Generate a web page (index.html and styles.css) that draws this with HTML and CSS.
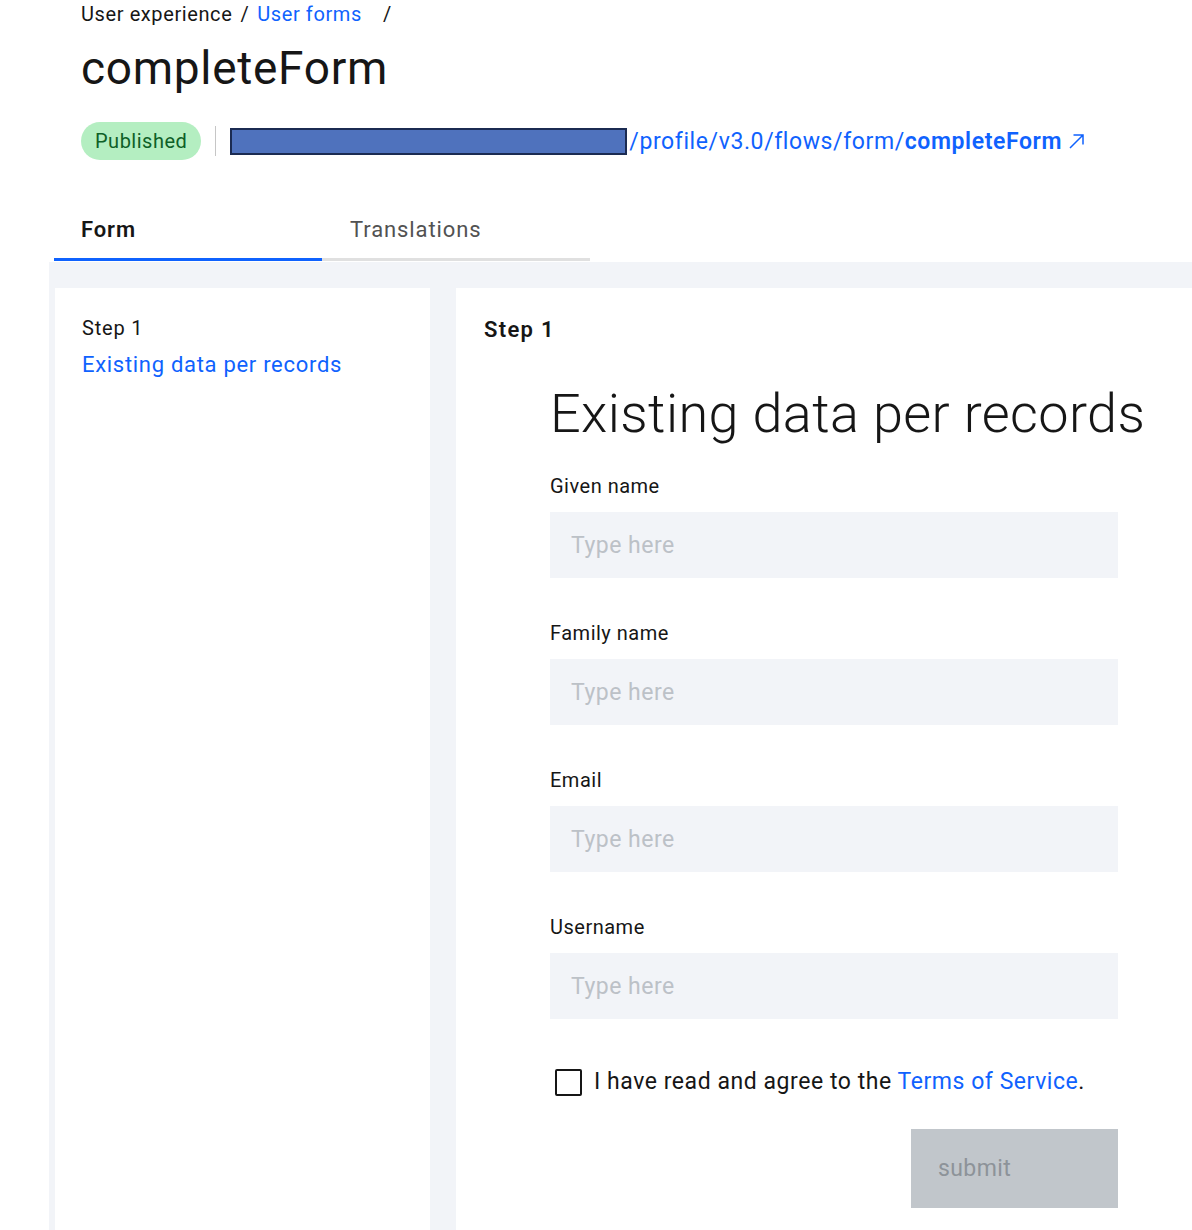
FILE: index.html
```html
<!DOCTYPE html>
<html lang="en">
  <head>
    <meta charset="UTF-8" />
    <meta name="viewport" content="width=device-width, initial-scale=1.0" />
    <title>completeForm</title>
    <link rel="stylesheet" href="styles.css">
  </head>
  <body>
    <div class="page-header">
      <nav class="breadcrumb">
        <span>User experience</span>
        <span class="crumb-sep">/</span>
        <a href="#">User forms</a>
        <span class="crumb-sep last">/</span>
      </nav>
      <h1 class="title">completeForm</h1>
      <div class="meta">
        <span class="tag">Published</span>
        <span class="divider"></span>
        <a class="endpoint" href="#"><span class="redacted"></span>/profile/v3.0/flows/form/<strong>completeForm</strong><svg class="launch" width="20" height="20" viewBox="0 0 20 20"><path d="M3 17 L16 4 M6.5 4 H16 V13.5" fill="none" stroke="currentColor" stroke-width="1.5"/></svg></a>
      </div>
    </div>

    <div class="tabs">
      <button class="tab active">Form</button>
      <button class="tab">Translations</button>
    </div>

    <div class="workspace">
      <aside class="steps">
        <div class="step-num">Step 1</div>
        <a class="step-link" href="#">Existing data per records</a>
      </aside>

      <section class="preview">
        <div class="preview-step">Step 1</div>
        <form class="user-form">
          <h2 class="form-title">Existing data per records</h2>

          <div class="field">
            <label>Given name</label>
            <input type="text" placeholder="Type here">
          </div>
          <div class="field">
            <label>Family name</label>
            <input type="text" placeholder="Type here">
          </div>
          <div class="field">
            <label>Email</label>
            <input type="text" placeholder="Type here">
          </div>
          <div class="field">
            <label>Username</label>
            <input type="text" placeholder="Type here">
          </div>

          <label class="agree">
            <span class="box"></span>
            <span>I have read and agree to the <a href="#">Terms of Service</a>.</span>
          </label>

          <div class="actions">
            <button type="button" class="submit" disabled>submit</button>
          </div>
        </form>
      </section>
    </div>
  </body>
</html>
```

FILE: styles.css
```css
* {
  box-sizing: border-box;
}
body {
  margin: 0;
  font-family: Roboto, "Noto Sans", sans-serif;
  color: #161616;
  background: #fff;
  overflow: hidden;
}
a {
  color: #0f62fe;
  text-decoration: none;
}

.page-header {
  padding: 2px 0 0 81px;
}
.breadcrumb {
  font-size: 20px;
  line-height: 24px;
  letter-spacing: 0.6px;
  display: flex;
}
.crumb-sep {
  margin: 0 8px;
}
.crumb-sep.last {
  margin-left: 21px;
}
.title {
  margin: 14px 0 0;
  font-size: 46px;
  line-height: 56px;
  font-weight: 400;
  letter-spacing: 0.7px;
}
.meta {
  margin-top: 26px;
  display: flex;
  align-items: center;
  height: 38px;
}
.tag {
  background: #b4eec1;
  color: #0e6027;
  font-size: 20px;
  letter-spacing: 0.5px;
  height: 38px;
  line-height: 38px;
  padding: 0 14px;
  border-radius: 19px;
}
.divider {
  width: 1px;
  height: 30px;
  background: #c6c6c6;
  margin: 0 14px;
}
.endpoint {
  display: flex;
  align-items: center;
  font-size: 23px;
  letter-spacing: 0.6px;
}
.redacted {
  width: 397px;
  height: 27px;
  background: #4f72bd;
  border: 2px solid #1b2b52;
  margin-right: 2px;
}
.endpoint strong {
  font-weight: 600;
}
.launch {
  margin-left: 5px;
}

.tabs {
  margin: 40px 0 1px 54px;
  display: flex;
}
.tab {
  width: 268px;
  text-align: left;
  background: none;
  border: 0;
  border-bottom: 3px solid #e0e0e0;
  padding: 16px 0 14px 28px;
  font-family: inherit;
  font-size: 22px;
  letter-spacing: 0.9px;
  line-height: 28px;
  color: #525252;
}
.tab.active {
  padding-left: 27px;
  border-bottom-color: #0f62fe;
  color: #161616;
  font-weight: 600;
}

.workspace {
  margin-left: 49px;
  background: #f2f4f8;
  padding: 26px 0 0 6px;
  display: flex;
  gap: 26px;
}
.steps {
  width: 375px;
  min-height: 1000px;
  background: #fff;
  padding: 28px 27px;
}
.step-num {
  font-size: 20px;
  letter-spacing: 0.8px;
  line-height: 24px;
}
.step-link {
  display: block;
  margin-top: 10px;
  font-size: 22px;
  letter-spacing: 0.7px;
  line-height: 30px;
}
.preview {
  flex: 1;
  background: #fff;
  padding: 28px 28px;
}
.preview-step {
  font-size: 22px;
  letter-spacing: 1.3px;
  line-height: 28px;
  font-weight: 600;
}
.user-form {
  margin-left: 66px;
  width: 568px;
}
.form-title {
  margin: 40px 0 30px;
  font-size: 54px;
  line-height: 60px;
  font-weight: 300;
  letter-spacing: 0.4px;
  white-space: nowrap;
}
.field {
  margin-bottom: 43px;
}
.field label {
  display: block;
  font-size: 20px;
  letter-spacing: 0.5px;
  line-height: 24px;
  margin-bottom: 14px;
}
.field input {
  display: block;
  width: 100%;
  height: 66px;
  border: 0;
  background: #f2f4f8;
  padding: 0 21px;
  font-family: inherit;
  font-size: 23px;
  letter-spacing: 0.5px;
  outline: none;
}
.field input::placeholder {
  color: #bcc1c7;
}
.agree {
  margin-top: 48px;
  display: flex;
  align-items: center;
  font-size: 23px;
  letter-spacing: 0.55px;
  line-height: 30px;
}
.box {
  width: 27px;
  height: 27px;
  border: 2px solid #161616;
  border-radius: 2px;
  margin: 0 12px 0 5px;
  flex: none;
}
.actions {
  margin-top: 32px;
  display: flex;
  justify-content: flex-end;
}
.submit {
  width: 207px;
  height: 79px;
  border: 0;
  background: #c1c6cb;
  color: #8d9399;
  font-family: inherit;
  font-size: 23px;
  letter-spacing: 0.4px;
  text-align: left;
  padding: 0 27px;
}
```
